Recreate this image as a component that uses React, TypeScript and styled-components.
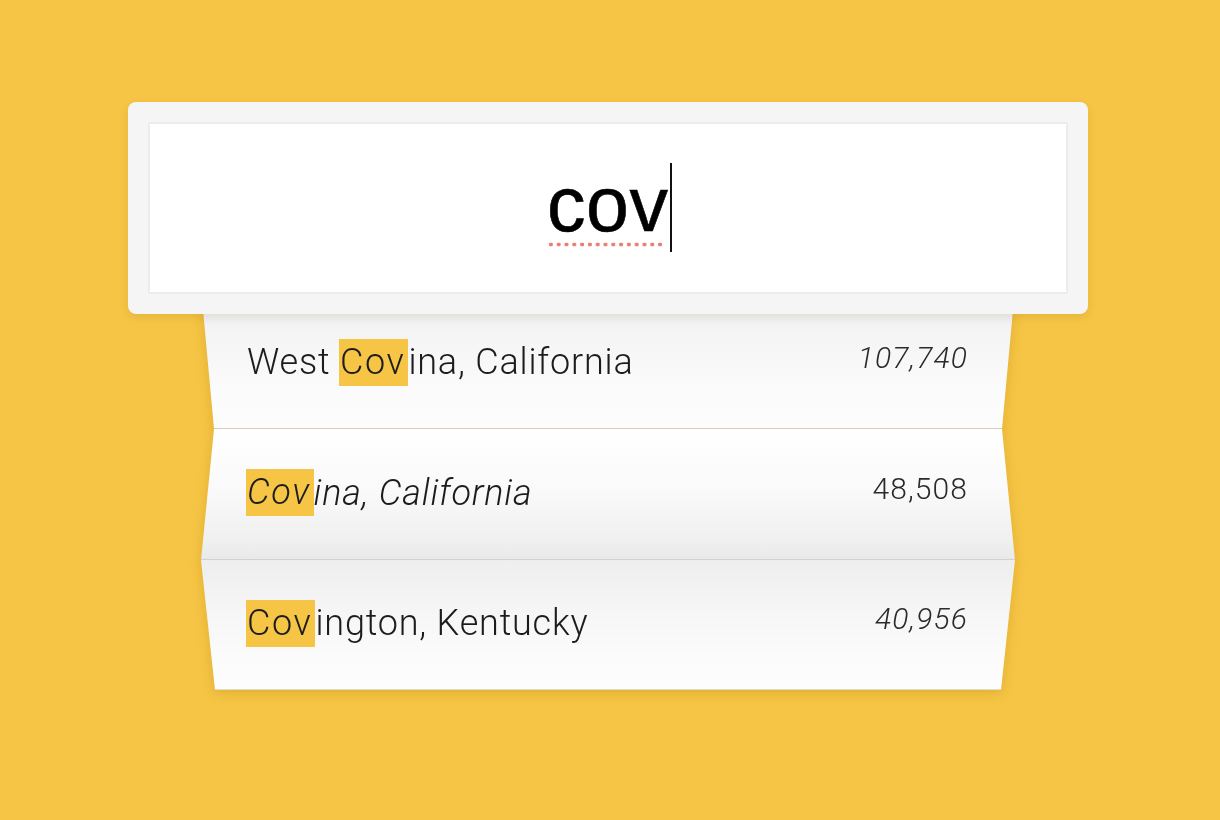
import styled, { createGlobalStyle } from "styled-components";

const GlobalStyle = createGlobalStyle`
  html, body {
    margin: 0;
    background: #f6c545;
  }
  body {
    font-family: "Liberation Sans", Arial, sans-serif;
  }
`;

type City = {
  before: string;
  match: string;
  after: string;
  population: string;
  nameSlant?: boolean;
  countSlant?: boolean;
};

const cities: City[] = [
  { before: "West ", match: "Cov", after: "ina, California", population: "107,740", countSlant: true },
  { before: "", match: "Cov", after: "ina, California", population: "48,508", nameSlant: true },
  { before: "", match: "Cov", after: "ington, Kentucky", population: "40,956", countSlant: true },
];

// each panel of the folded list: [top inset, bottom inset, height]
const folds: [number, number, number][] = [
  [1, 13, 130],
  [13, 0, 131],
  [0, 14, 130],
];

const shades = [
  "linear-gradient(to bottom, #ececec 0%, #f4f4f4 25%, #fbfbfb 70%, #fdfdfd 100%)",
  "linear-gradient(to bottom, #ffffff 0%, #fafafa 45%, #f0f0f0 85%, #e9e9e9 100%)",
  "linear-gradient(to bottom, #eeeeee 0%, #f5f5f5 35%, #fcfcfc 80%, #fdfdfd 100%)",
];

const lines = ["#d9ccb0", "#d2d2d2", "#e3dcc8"];

const App = () => {
  return (
    <Page>
      <GlobalStyle />
      <Stage>
        <SearchPanel>
          <Field>
            <Query>cov</Query>
            <Caret />
          </Field>
        </SearchPanel>

        <Results>
          {cities.map((c, i) => (
            <Row key={i} $fold={folds[i]} $shade={shades[i]} $line={lines[i]}>
              <Name $slant={c.nameSlant}>
                {c.before}
                <Hit>{c.match}</Hit>
                {c.after}
              </Name>
              <Count $slant={c.countSlant}>{c.population}</Count>
            </Row>
          ))}
        </Results>
      </Stage>
    </Page>
  );
};

const Page = styled.div`
  min-height: 820px;
  padding: 102px 4px 0 0;
  box-sizing: border-box;
`;

const Stage = styled.div`
  width: 960px;
  margin: 0 auto;
  display: flex;
  flex-direction: column;
  align-items: center;
`;

const SearchPanel = styled.div`
  position: relative;
  z-index: 2;
  width: 960px;
  height: 212px;
  padding: 20px;
  box-sizing: border-box;
  background: #f5f5f5;
  border-radius: 8px;
  box-shadow: 0 3px 8px rgba(90, 70, 20, 0.12);
`;

const Field = styled.div`
  height: 100%;
  box-sizing: border-box;
  background: #fff;
  border: 2px solid #ececec;
  display: flex;
  align-items: center;
  justify-content: center;
  padding-left: 3px;
`;

const Query = styled.span`
  position: relative;
  font-family: "Liberation Sans", Arial, sans-serif;
  font-size: 77px;
  line-height: 1;
  color: #000;
  -webkit-text-stroke: 0.6px #000;
  letter-spacing: 0.5px;
  margin-top: -8px;

  &::after {
    content: "";
    position: absolute;
    left: 0;
    right: 4px;
    bottom: -4px;
    height: 5px;
    background-image: radial-gradient(circle, #ea7d72 1.7px, transparent 2.2px);
    background-size: 7.8px 5px;
    background-repeat: repeat-x;
  }
`;

const Caret = styled.span`
  display: inline-block;
  width: 1.5px;
  height: 89px;
  margin-left: 2px;
  margin-top: -2px;
  background: #111;
`;

const Results = styled.div`
  width: 814px;
  margin-top: -15px;
  display: flex;
  flex-direction: column;
  filter: drop-shadow(0 3px 6px rgba(170, 115, 0, 0.28));
`;

const Row = styled.div<{ $fold: [number, number, number]; $shade: string; $line: string }>`
  height: ${({ $fold }) => $fold[2]}px;
  box-sizing: border-box;
  padding: 0 47px 0 46px;
  display: flex;
  align-items: center;
  justify-content: space-between;
  background: ${({ $shade }) => $shade};
  border-bottom: 1.5px solid ${({ $line }) => $line};
  clip-path: ${({ $fold: [t, b] }) =>
    `polygon(${t}px 0, calc(100% - ${t}px) 0, calc(100% - ${b}px) 100%, ${b}px 100%)`};
`;

const Name = styled.div<{ $slant?: boolean }>`
  font-family: Roboto, "Liberation Sans", sans-serif;
  font-weight: 300;
  font-size: 36px;
  letter-spacing: 0.8px;
  color: #1c1c1c;
  font-style: ${({ $slant }) => ($slant ? "italic" : "normal")};
  white-space: nowrap;
`;

const Hit = styled.span`
  display: inline-block;
  line-height: 47px;
  padding: 0 3px 0 1px;
  letter-spacing: 1.6px;
  background: #f6c545;
  vertical-align: middle;
  margin: -4px 0 0 -1px;
`;

const Count = styled.div<{ $slant?: boolean }>`
  font-family: Roboto, "Liberation Sans", sans-serif;
  font-weight: 300;
  font-size: 30px;
  letter-spacing: 1.1px;
  color: #2a2a2a;
  margin-bottom: 12px;
  font-style: ${({ $slant }) => ($slant ? "italic" : "normal")};
`;

export default App;
